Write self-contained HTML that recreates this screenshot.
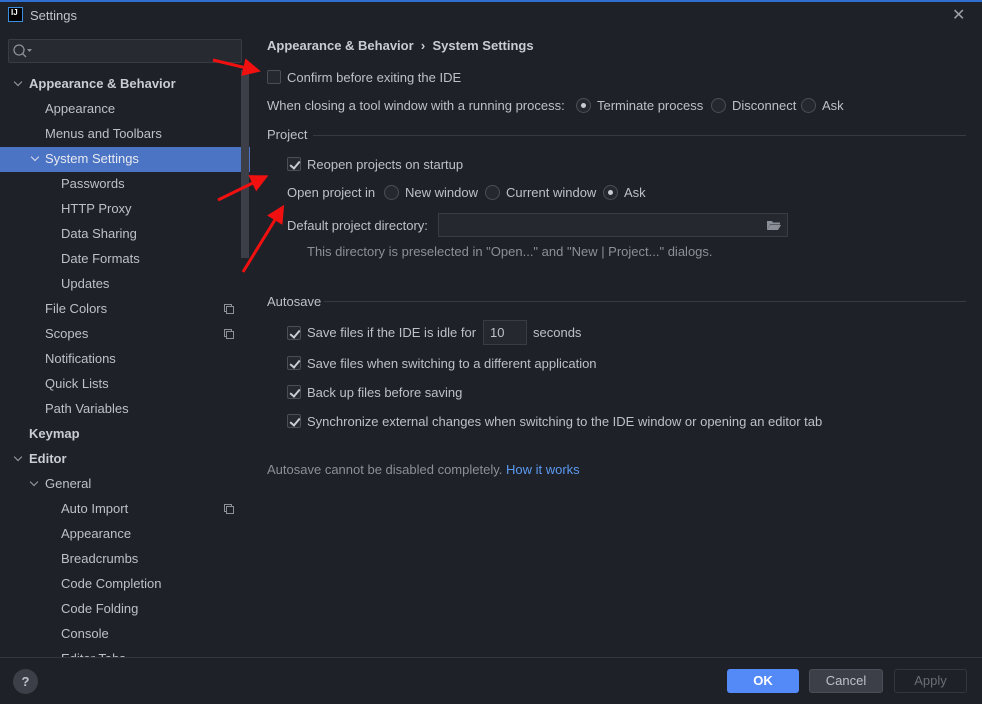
<!DOCTYPE html>
<html><head><meta charset="utf-8"><style>
*{margin:0;padding:0;box-sizing:border-box}
body{width:982px;height:704px;background:#1f2128;font-family:"Liberation Sans","DejaVu Sans",sans-serif;font-size:13px;color:#bcc0c8;position:relative;overflow:hidden}
.a{position:absolute;white-space:nowrap}
.cb{position:absolute;width:14px;height:14px;border:1px solid #4a4e57;border-radius:2px;background:#25282f}
.cb.on::after{content:"";position:absolute;left:3.5px;top:0.5px;width:4px;height:8px;border:solid #c8ccd4;border-width:0 2px 2px 0;transform:rotate(40deg)}
.rb{position:absolute;width:15px;height:15px;border:1px solid #4a4e57;border-radius:50%;background:#25282f}
.rb.on::after{content:"";position:absolute;left:4px;top:4px;width:5px;height:5px;border-radius:50%;background:#c8ccd4}
.line{position:absolute;height:1px;background:#363a43}
.b{font-weight:bold;color:#c8ccd4}
.sel{position:absolute;left:0;top:147px;width:250px;height:25px;background:#4b74c5}
.chev{position:absolute;width:6px;height:6px;border:solid #9aa0aa;border-width:0 1.5px 1.5px 0;transform:rotate(45deg)}
.cp{position:absolute;width:8px;height:8px;border:1px solid #8a8f98}
</style></head><body>
<div class="a" style="left:0;top:0;width:982px;height:2px;background:#2f6fd0"></div>
<div class="a" style="left:8px;top:7px;width:15px;height:15px;background:#000;border:1px solid #3b8fe0;color:#fff;font-size:8px;font-weight:bold;line-height:10px;padding-left:2px">IJ</div>
<div class="a" style="left:30px;top:8px;color:#c0c4cc">Settings</div>
<div class="a" style="left:952px;top:5px;font-size:16px;color:#9aa0aa">✕</div>

<div class="a" style="left:8px;top:39px;width:234px;height:24px;background:#272a31;border:1px solid #393c44;border-radius:2px"></div>
<svg class="a" style="left:12px;top:43px" width="22" height="16"><circle cx="7" cy="7" r="5" stroke="#8a8f98" stroke-width="1.3" fill="none"/><line x1="10.5" y1="10.5" x2="14" y2="14" stroke="#8a8f98" stroke-width="1.3"/><path d="M15 6h5l-2.5 3z" fill="#8a8f98"/></svg>

<div class="sel"></div>
<div class="a" style="left:241px;top:70px;width:8px;height:188px;background:#3c3f47"></div>

<div class="chev" style="left:15px;top:79px"></div>
<div class="a b" style="left:29px;top:76px">Appearance &amp; Behavior</div>
<div class="a" style="left:45px;top:101px">Appearance</div>
<div class="a" style="left:45px;top:126px">Menus and Toolbars</div>
<div class="chev" style="left:32px;top:154px;border-color:#dde"></div>
<div class="a" style="left:45px;top:151px;color:#e8eaf0">System Settings</div>
<div class="a" style="left:61px;top:176px">Passwords</div>
<div class="a" style="left:61px;top:201px">HTTP Proxy</div>
<div class="a" style="left:61px;top:226px">Data Sharing</div>
<div class="a" style="left:61px;top:251px">Date Formats</div>
<div class="a" style="left:61px;top:276px">Updates</div>
<div class="a" style="left:45px;top:301px">File Colors</div>
<div class="a" style="left:45px;top:326px">Scopes</div>
<div class="a" style="left:45px;top:351px">Notifications</div>
<div class="a" style="left:45px;top:376px">Quick Lists</div>
<div class="a" style="left:45px;top:401px">Path Variables</div>
<div class="a b" style="left:29px;top:426px">Keymap</div>
<div class="chev" style="left:15px;top:454px"></div>
<div class="a b" style="left:29px;top:451px">Editor</div>
<div class="chev" style="left:31px;top:479px"></div>
<div class="a" style="left:45px;top:476px">General</div>
<div class="a" style="left:61px;top:501px">Auto Import</div>
<div class="a" style="left:61px;top:526px">Appearance</div>
<div class="a" style="left:61px;top:551px">Breadcrumbs</div>
<div class="a" style="left:61px;top:576px">Code Completion</div>
<div class="a" style="left:61px;top:601px">Code Folding</div>
<div class="a" style="left:61px;top:626px">Console</div>
<div class="a" style="left:61px;top:651px;height:6px;overflow:hidden">Editor Tabs</div>
<div class="cp" style="left:224px;top:304px"></div><div class="cp" style="left:226px;top:306px;background:#1f2128"></div>
<div class="cp" style="left:224px;top:329px"></div><div class="cp" style="left:226px;top:331px;background:#1f2128"></div>
<div class="cp" style="left:224px;top:504px"></div><div class="cp" style="left:226px;top:506px;background:#1f2128"></div>

<div class="a b" style="left:267px;top:38px">Appearance &amp; Behavior&nbsp;&nbsp;›&nbsp;&nbsp;System Settings</div>
<div class="cb" style="left:267px;top:70px"></div>
<div class="a" style="left:287px;top:70px">Confirm before exiting the IDE</div>
<div class="a" style="left:267px;top:98px">When closing a tool window with a running process:</div>
<div class="rb on" style="left:576px;top:98px"></div>
<div class="a" style="left:597px;top:98px">Terminate process</div>
<div class="rb" style="left:711px;top:98px"></div>
<div class="a" style="left:732px;top:98px">Disconnect</div>
<div class="rb" style="left:801px;top:98px"></div>
<div class="a" style="left:822px;top:98px">Ask</div>

<div class="a" style="left:267px;top:127px">Project</div>
<div class="line" style="left:313px;top:135px;width:653px"></div>
<div class="cb on" style="left:287px;top:157px"></div>
<div class="a" style="left:307px;top:157px">Reopen projects on startup</div>
<div class="a" style="left:287px;top:185px">Open project in</div>
<div class="rb" style="left:384px;top:185px"></div>
<div class="a" style="left:405px;top:185px">New window</div>
<div class="rb" style="left:485px;top:185px"></div>
<div class="a" style="left:506px;top:185px">Current window</div>
<div class="rb on" style="left:603px;top:185px"></div>
<div class="a" style="left:624px;top:185px">Ask</div>
<div class="a" style="left:287px;top:218px">Default project directory:</div>
<div class="a" style="left:438px;top:213px;width:350px;height:24px;background:#25282f;border:1px solid #393c44"></div>
<svg class="a" style="left:766px;top:219px" width="16" height="12"><path d="M1 2h5l1 1.5h7v2H4L1 11z" fill="#8a8f98"/><path d="M4 6h11l-3 5H1z" fill="#8a8f98"/></svg>
<div class="a" style="left:307px;top:244px;color:#8a8f98">This directory is preselected in "Open..." and "New | Project..." dialogs.</div>

<div class="a" style="left:267px;top:294px">Autosave</div>
<div class="line" style="left:324px;top:301px;width:642px"></div>
<div class="cb on" style="left:287px;top:326px"></div>
<div class="a" style="left:307px;top:325px">Save files if the IDE is idle for</div>
<div class="a" style="left:483px;top:320px;width:44px;height:25px;background:#25282f;border:1px solid #393c44;padding:4px 0 0 6px">10</div>
<div class="a" style="left:533px;top:325px">seconds</div>
<div class="cb on" style="left:287px;top:356px"></div>
<div class="a" style="left:307px;top:356px">Save files when switching to a different application</div>
<div class="cb on" style="left:287px;top:385px"></div>
<div class="a" style="left:307px;top:385px">Back up files before saving</div>
<div class="cb on" style="left:287px;top:414px"></div>
<div class="a" style="left:307px;top:414px">Synchronize external changes when switching to the IDE window or opening an editor tab</div>
<div class="a" style="left:267px;top:462px;color:#8a8f98">Autosave cannot be disabled completely. <span style="color:#5a9af0">How it works</span></div>

<div class="line" style="left:0;top:657px;width:982px;background:#33363e"></div>
<div class="a" style="left:13px;top:669px;width:25px;height:25px;border-radius:50%;background:#3c3f47;color:#c0c4cc;text-align:center;line-height:25px;font-weight:bold">?</div>
<div class="a" style="left:727px;top:669px;width:72px;height:24px;background:#548af7;border-radius:3px;color:#fff;font-weight:bold;text-align:center;line-height:24px">OK</div>
<div class="a" style="left:809px;top:669px;width:74px;height:24px;background:#3c3f47;border:1px solid #4a4e57;border-radius:3px;text-align:center;line-height:22px">Cancel</div>
<div class="a" style="left:894px;top:669px;width:73px;height:24px;border:1px solid #33363e;border-radius:3px;color:#6a6e76;text-align:center;line-height:22px">Apply</div>

<svg class="a" style="left:0;top:0" width="982" height="704">
<defs><marker id="m" markerWidth="6" markerHeight="6" refX="4" refY="3" orient="auto"><path d="M0 0L6 3L0 6z" fill="#f01010"/></marker></defs>
<g stroke="#f01010" stroke-width="3" marker-end="url(#m)">
<line x1="213" y1="60" x2="255" y2="70"/>
<line x1="218" y1="200" x2="263" y2="178"/>
<line x1="243" y1="272" x2="281" y2="210"/>
</g></svg>
</body></html>
